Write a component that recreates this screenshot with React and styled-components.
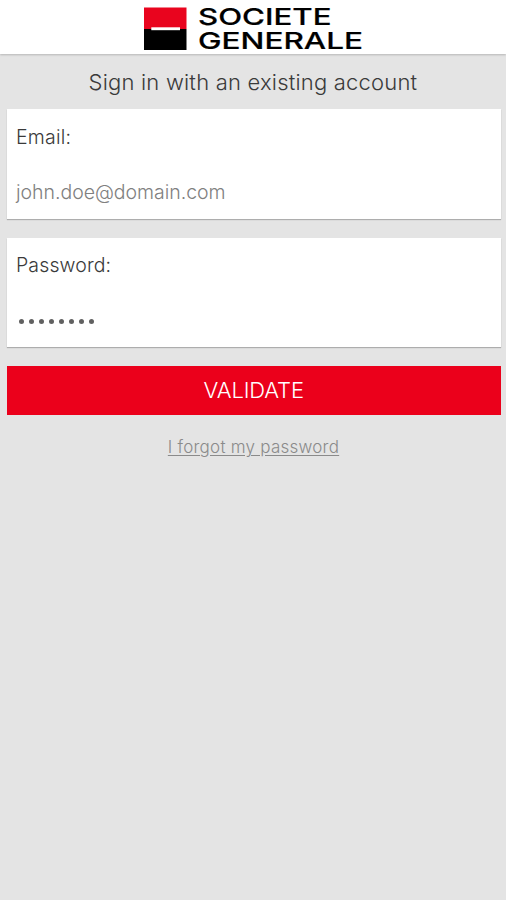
import React from "react";
import styled, { createGlobalStyle } from "styled-components";

function Logo() {
  return (
    <svg width="226" height="54" viewBox="-3 -5 226 54">
      <rect x="1" y="2.5" width="42.5" height="21.5" fill="#e9041e" />
      <rect x="1" y="24" width="42.5" height="21" fill="#000" />
      <rect x="8.3" y="22.3" width="28.7" height="2.9" fill="#fff" />
      <LogoText x="55" y="20" textLength="133.5" lengthAdjust="spacingAndGlyphs">
        SOCIETE
      </LogoText>
      <LogoText x="55" y="44" textLength="165" lengthAdjust="spacingAndGlyphs">
        GENERALE
      </LogoText>
    </svg>
  );
}

function App() {
  return (
    <Page>
      <GlobalStyle />
      <Header>
        <Logo />
      </Header>
      <Heading>Sign in with an existing account</Heading>
      <Form>
        <Field>
          <Label>Email:</Label>
          <Value>john.doe@domain.com</Value>
        </Field>
        <Field>
          <Label $spacing="0.12px">Password:</Label>
          <Dots>
            {Array.from({ length: 8 }, (_, i) => (
              <Dot key={i} />
            ))}
          </Dots>
        </Field>
        <Button type="button">VALIDATE</Button>
      </Form>
      <Forgot href="#">I forgot my password</Forgot>
    </Page>
  );
}

const GlobalStyle = createGlobalStyle`
  * {
    box-sizing: border-box;
  }
  body {
    margin: 0;
    background-color: #e4e4e4;
    font-family: Inter, "Liberation Sans", sans-serif;
    font-weight: 300;
  }
`;

const Page = styled.div`
  display: flex;
  flex-direction: column;
  min-height: 100vh;
  background-color: #e4e4e4;
`;

const Header = styled.header`
  display: flex;
  justify-content: center;
  height: 54px;
  background-color: #fff;
  box-shadow: 0 1px 2px rgba(0, 0, 0, 0.2);
`;

const LogoText = styled.text`
  font-family: Inter, "Liberation Sans", sans-serif;
  font-size: 23.5px;
  font-weight: 500;
  fill: #000;
  stroke: #000;
  stroke-width: 0.2px;
`;

const Heading = styled.h1`
  height: 55px;
  margin: 0;
  color: #3a3a3a;
  font-size: 22px;
  font-weight: 300;
  line-height: 56px;
  letter-spacing: 0.2px;
  text-align: center;
`;

const Form = styled.form`
  display: flex;
  flex-direction: column;
  gap: 19px;
  padding: 0 5.5px 0 7px;
`;

const Field = styled.div`
  display: flex;
  flex-direction: column;
  height: 109.5px;
  padding: 13.7px 9px;
  background-color: #fff;
  box-shadow: 0 1px 1px rgba(0, 0, 0, 0.24);
`;

const Label = styled.label`
  color: #3a3a3a;
  font-size: 19.5px;
  line-height: 28px;
  letter-spacing: ${({ $spacing }) => $spacing || "0.2px"};
`;

const Value = styled.span`
  margin-top: 27px;
  color: #808080;
  font-size: 19.5px;
  line-height: 28px;
  letter-spacing: -0.03px;
`;

const Dots = styled.div`
  display: flex;
  gap: 5px;
  margin-top: 40px;
  padding-left: 3px;
`;

const Dot = styled.span`
  width: 5px;
  height: 5px;
  border-radius: 50%;
  background-color: #606060;
`;

const Button = styled.button`
  height: 49px;
  border: none;
  padding: 0;
  background-color: #eb001b;
  color: #fff;
  font-family: inherit;
  font-size: 22px;
  font-weight: 300;
  line-height: 49px;
  letter-spacing: -0.15px;
`;

const Forgot = styled.a`
  align-self: center;
  margin-top: 20px;
  padding-left: 1px;
  color: #8a8a8a;
  font-size: 17px;
  line-height: 24px;
  letter-spacing: 0.24px;
  text-underline-offset: 2px;
`;

export default App;
